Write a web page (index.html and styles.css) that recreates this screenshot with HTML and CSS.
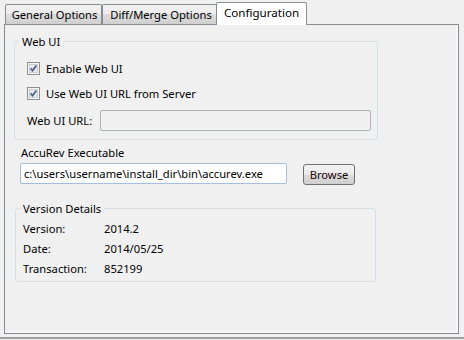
FILE: index.html
```html
<!DOCTYPE html>
<html lang="en">
<head>
    <meta charset="UTF-8">
    <title>Configuration</title>
    <link rel="stylesheet" href="styles.css">
</head>
<body>
    <div class="tabs">
        <div class="tab tab-general">General Options</div>
        <div class="tab tab-diff">Diff/Merge Options</div>
        <div class="tab tab-config active">Configuration</div>
    </div>

    <div class="panel">
        <fieldset class="group web-ui">
            <legend>Web UI</legend>

            <label class="check-row first">
                <svg class="checkbox" width="13" height="13" viewBox="0 0 13 13">
                    <rect x="0.5" y="0.5" width="12" height="12" fill="#f6f6f6" stroke="#8e8f8f"/>
                    <rect x="2.5" y="2.5" width="8" height="8" fill="#e6e8eb" stroke="#c9ccd1"/>
                    <path d="M3.6 6.4 L5.6 8.6 L9.4 3.4" fill="none" stroke="#4f6390" stroke-width="1.7"/>
                </svg>
                Enable Web UI
            </label>

            <label class="check-row">
                <svg class="checkbox" width="13" height="13" viewBox="0 0 13 13">
                    <rect x="0.5" y="0.5" width="12" height="12" fill="#f6f6f6" stroke="#8e8f8f"/>
                    <rect x="2.5" y="2.5" width="8" height="8" fill="#e6e8eb" stroke="#c9ccd1"/>
                    <path d="M3.6 6.4 L5.6 8.6 L9.4 3.4" fill="none" stroke="#4f6390" stroke-width="1.7"/>
                </svg>
                Use Web UI URL from Server
            </label>

            <div class="url-row">
                <label for="webUiUrl" class="url-label">Web UI URL:</label>
                <input type="text" id="webUiUrl" class="text-box url-box" disabled>
            </div>
        </fieldset>

        <div class="exe-label">AccuRev Executable</div>
        <div class="exe-row">
            <input type="text" class="text-box exe-box" value="c:\users\username\install_dir\bin\accurev.exe">
            <button class="browse">Browse</button>
        </div>

        <fieldset class="group version">
            <legend>Version Details</legend>
            <div class="detail-row first">
                <span class="detail-name">Version:</span>
                <span>2014.2</span>
            </div>
            <div class="detail-row">
                <span class="detail-name">Date:</span>
                <span>2014/05/25</span>
            </div>
            <div class="detail-row">
                <span class="detail-name">Transaction:</span>
                <span>852199</span>
            </div>
        </fieldset>
    </div>

    <div class="bottom-line"></div>
</body>
</html>
```

FILE: styles.css
```css
* {
    box-sizing: border-box;
}
body {
    margin: 0;
    width: 464px;
    height: 340px;
    overflow: hidden;
    background: #f0f0f0;
    color: #000;
    font-family: "Noto Sans", sans-serif;
    font-size: 11.2px;
    line-height: 15px;
}

/* tab strip */
.tabs {
    display: flex;
    align-items: flex-end;
    height: 24px;
    padding: 2px 0 0 5px;
}
.tab {
    height: 20px;
    line-height: 19px;
    border: 1px solid #898c95;
    border-bottom: none;
    border-radius: 2px 2px 0 0;
    background: linear-gradient(#f2f2f2, #ebebeb 50%, #dddddd 50%, #cfcfcf);
    text-align: center;
    white-space: nowrap;
}
.tab-general {
    width: 97px;
    padding-left: 2px;
}
.tab-diff {
    width: 115px;
    padding-left: 3px;
}
.tab-config {
    width: 91px;
    margin-left: -1px;
    font-size: 11.6px;
}
.tab.active {
    height: 23px;
    margin-bottom: -1px;
    background: #fff;
    position: relative;
    z-index: 1;
}

/* page */
.panel {
    margin-left: 4px;
    width: 455px;
    height: 310px;
    border: 1px solid #898c95;
    box-shadow: inset -2px -2px 0 #f8f8f8;
}

.group {
    margin: 0;
    padding: 0;
    min-width: 0;
    border: 1px solid #d5dfe5;
    border-radius: 3px;
}
.group legend {
    margin-left: 4px;
    padding: 0 3px;
}

.web-ui {
    margin: 9px 0 0 9px;
    width: 364px;
    padding-bottom: 8px;
}
.check-row {
    display: flex;
    align-items: center;
    gap: 6px;
    height: 18px;
    margin-top: 7px;
    padding-left: 12px;
}
.check-row.first {
    margin-top: 10px;
}
.url-row {
    display: flex;
    align-items: center;
    height: 21px;
    margin-top: 8px;
    padding-left: 12px;
}
.url-label {
    width: 73px;
}
.text-box {
    height: 21px;
    margin: 0;
    padding: 0 3px;
    font: inherit;
    color: #000;
    border: 1px solid #abadb3;
    border-radius: 2px;
}
.url-box {
    width: 271px;
    background: #f0f0f0;
    border-color: #adb2b5;
}

.exe-label {
    margin-top: 5px;
    padding-left: 16px;
}
.exe-row {
    display: flex;
    align-items: flex-start;
    gap: 16px;
    margin-top: 3px;
    padding-left: 15px;
}
.exe-box {
    width: 267px;
    background: #fff;
    border-color: #a3bfe0;
}
.browse {
    width: 52px;
    height: 21px;
    margin-top: 1px;
    padding: 0;
    font: inherit;
    color: #1a0000;
    border: 1px solid #707070;
    border-radius: 3px;
    background: linear-gradient(#f2f2f2, #ebebeb 50%, #dddddd 50%, #cfcfcf);
}

.version {
    margin: 16px 0 0 10px;
    width: 361px;
    padding-bottom: 3px;
}
.detail-row {
    display: flex;
    align-items: center;
    height: 20px;
    padding-left: 7px;
}
.detail-row.first {
    margin-top: 2px;
}
.detail-name {
    width: 81px;
}

.bottom-line {
    margin-top: 3px;
    height: 2px;
    background: #a0a0a0;
}
```
